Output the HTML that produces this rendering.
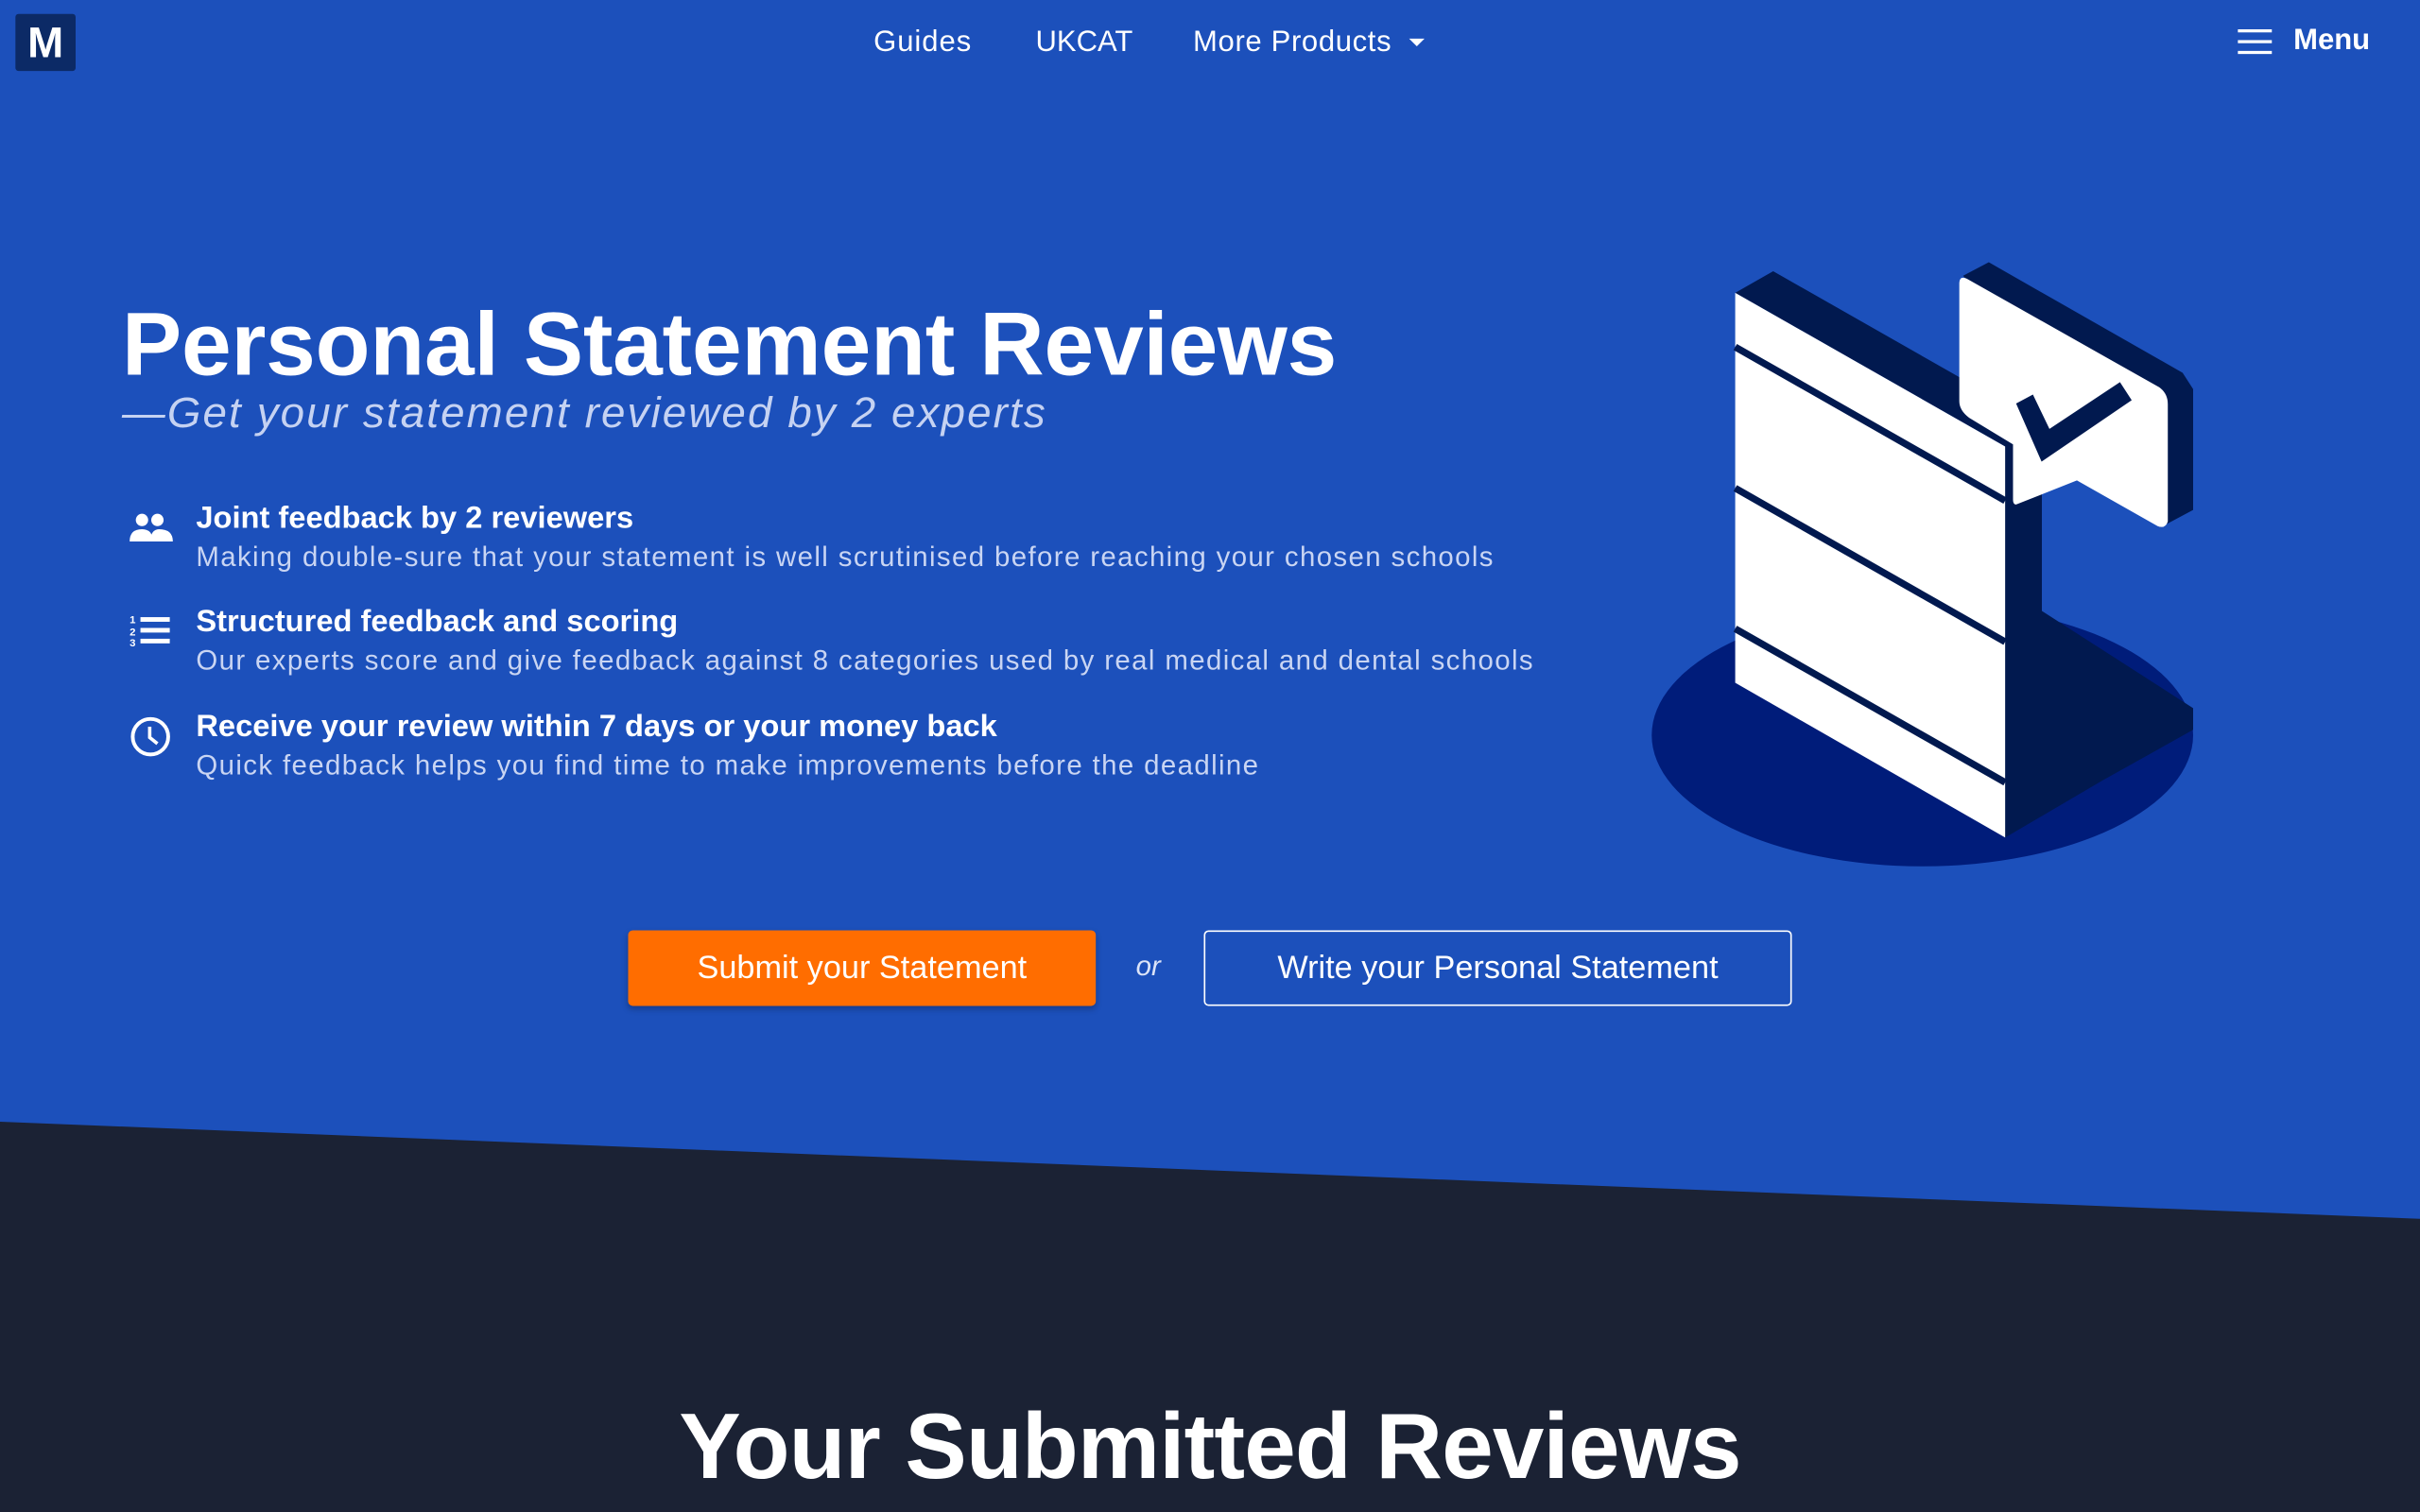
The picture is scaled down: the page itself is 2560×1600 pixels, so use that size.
<!DOCTYPE html>
<html><head><meta charset="utf-8"><style>
html,body{margin:0;padding:0;width:2560px;height:1600px;overflow:hidden;background:#1c50bb;font-family:"Liberation Sans",sans-serif;}
#w{position:absolute;left:0;top:0;width:1568px;height:980px;transform:scale(1.632653);transform-origin:0 0;color:#fff;}
.a{position:absolute;white-space:nowrap;}
</style></head><body>
<div id="w">
<svg class="a" style="left:0;top:0" width="1568" height="980" viewBox="0 0 1568 980">
<polygon points="0,727 1568,790 1568,980 0,980" fill="#1b2234"/>
<ellipse cx="1245.6" cy="476.5" rx="175.4" ry="85" fill="#001c7a"/>
<polygon points="1299,289 1323,275 1323,396 1421,459 1421,473 1362,506 1299,543" fill="#01194f"/>
<polygon points="1124.3,189.8 1148.9,175.8 1322.8,274.8 1299.2,289.4" fill="#01194f"/>
<polygon points="1124.3,189.8 1299.2,289.4 1299.2,542.8 1124.3,442.5" fill="#fff"/>
<g stroke="#01194f" stroke-width="4.5">
<line x1="1124.3" y1="224.9" x2="1299.2" y2="324.5"/>
<line x1="1124.3" y1="316.4" x2="1299.2" y2="416"/>
<line x1="1124.3" y1="407.5" x2="1299.2" y2="507.1"/>
</g>
<polygon points="1272,178.7 1288.6,170 1414.2,241.6 1421,252.2 1421,330.5 1400,341.7" fill="#01194f"/>
<path d="M1269.5,184 Q1269.5,178 1275,181 L1399,251 Q1404.6,255 1404.6,262 L1404.6,338 Q1403,343 1398,341 L1345.7,311.4 L1306.3,327 Q1304.3,327 1304.3,324 L1304.3,288 L1275.9,270.8 Q1269.5,266 1269.5,260 Z" fill="#fff"/>
<polygon points="1306.3,261.5 1317.2,255.7 1327.9,278 1373.6,247.7 1381.2,259.4 1322.8,299.2" fill="#01194f"/>
</svg>
<div class="a" style="left:10px;top:9px;width:39px;height:37px;background:#0c2a66;border-radius:2px;font-weight:bold;font-size:28px;text-align:center;line-height:37px;">M</div>
<div class="a" style="left:566px;top:17px;font-size:19px;letter-spacing:0.6px;">Guides</div>
<div class="a" style="left:671px;top:17px;font-size:19px;">UKCAT</div>
<div class="a" style="left:773px;top:17px;font-size:19px;letter-spacing:0.4px;">More Products <span style="display:inline-block;width:0;height:0;border-left:5px solid transparent;border-right:5px solid transparent;border-top:5px solid #fff;vertical-align:middle;margin-left:6px"></span></div>
<div class="a" style="left:1450px;top:19px;width:22px;">
<div style="height:2px;background:#fff;margin-bottom:5px"></div><div style="height:2px;background:#fff;margin-bottom:5px"></div><div style="height:2px;background:#fff"></div></div>
<div class="a" style="left:1486px;top:16px;font-size:19px;font-weight:bold;">Menu</div>

<div class="a" style="left:79px;top:190px;font-size:58px;font-weight:bold;letter-spacing:-0.1px;">Personal Statement Reviews</div>
<div class="a" style="left:79px;top:252px;font-size:28px;font-style:italic;color:#c5d2f2;letter-spacing:1.3px;">—Get your statement reviewed by 2 experts</div>

<svg class="a" style="left:82px;top:330px" width="32" height="24" viewBox="0 0 32 24"><circle cx="10" cy="7" r="4" fill="#fff"/><circle cx="20" cy="7" r="4" fill="#fff"/><path d="M2,21 Q2,13 10,13 Q17,13 17,21Z M15,21 Q16,13 21,13 Q30,13 30,21Z" fill="#fff"/></svg>
<div class="a" style="left:127px;top:325px;font-size:20px;font-weight:bold;">Joint feedback by 2 reviewers</div>
<div class="a" style="left:127px;top:351px;font-size:18px;color:#c9d5f3;letter-spacing:0.85px;">Making double-sure that your statement is well scrutinised before reaching your chosen schools</div>

<svg class="a" style="left:84px;top:397px" width="28" height="24" viewBox="0 0 28 24"><g fill="#fff" font-size="7" font-weight="bold" font-family="Liberation Sans"><text x="0" y="7">1</text><text x="0" y="15">2</text><text x="0" y="22">3</text></g><rect x="7" y="3" width="19" height="3" fill="#fff"/><rect x="7" y="10" width="19" height="3" fill="#fff"/><rect x="7" y="17" width="19" height="3" fill="#fff"/></svg>
<div class="a" style="left:127px;top:392px;font-size:20px;font-weight:bold;">Structured feedback and scoring</div>
<div class="a" style="left:127px;top:418px;font-size:18px;color:#c9d5f3;letter-spacing:0.85px;">Our experts score and give feedback against 8 categories used by real medical and dental schools</div>

<svg class="a" style="left:84px;top:464px" width="28" height="28" viewBox="0 0 28 28"><circle cx="13.5" cy="13.5" r="11.5" fill="none" stroke="#fff" stroke-width="2.4"/><path d="M13,7 V14 L18,18" fill="none" stroke="#fff" stroke-width="2.2"/></svg>
<div class="a" style="left:127px;top:460px;font-size:20px;font-weight:bold;">Receive your review within 7 days or your money back</div>
<div class="a" style="left:127px;top:486px;font-size:18px;color:#c9d5f3;letter-spacing:0.85px;">Quick feedback helps you find time to make improvements before the deadline</div>

<div class="a" style="left:407px;top:603px;width:303px;height:49px;background:#ff6d00;border-radius:3px;box-shadow:0 2px 4px rgba(0,0,0,.25);font-size:21px;text-align:center;line-height:49px;">Submit your Statement</div>
<div class="a" style="left:736px;top:616px;font-size:18px;font-style:italic;color:#dce4f8;">or</div>
<div class="a" style="left:780px;top:603px;width:379px;height:47px;border:1.5px solid #fff;border-radius:3px;font-size:21px;text-align:center;line-height:47px;">Write your Personal Statement</div>

<div class="a" style="left:0;width:1568px;top:903px;text-align:center;font-size:60px;font-weight:bold;letter-spacing:-0.5px;">Your Submitted Reviews</div>
</div>
</body></html>
